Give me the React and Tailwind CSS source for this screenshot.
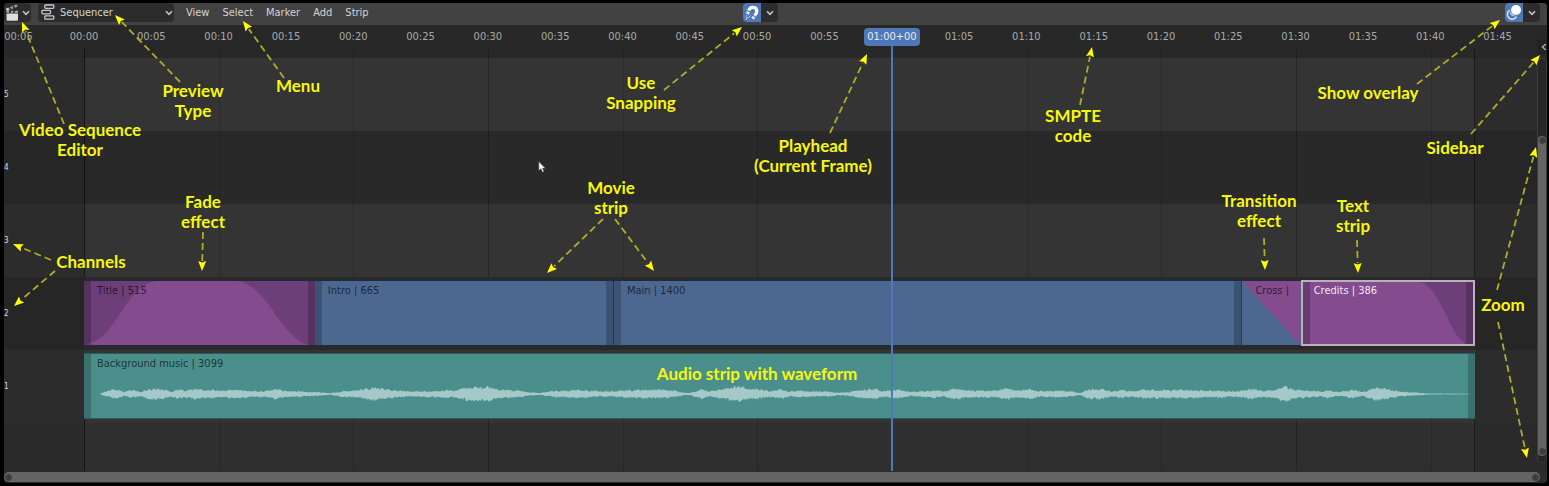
import React from "react";

const FPS = 30;
const W = 1549;
const H = 486;

const STRIP = "relative h-full min-w-0 border-y border-[#222a3a] overflow-hidden";

const TIMES = Array.from({ length: 23 }, (_, i) => (i - 1) * 5);
const GRID = Array.from({ length: 11 }, (_, i) => i * 10);

function timecode(s) {
  const a = Math.abs(s);
  const mm = String(Math.floor(a / 60)).padStart(2, "0");
  const ss = String(a % 60).padStart(2, "0");
  return `${s < 0 ? "-" : ""}${mm}:${ss}`;
}

const framePct = (f) => `${(f / 3099) * 100}%`;

const ENVELOPE = [
  [100, 0.3], [105, 2], [112, 4], [118, 4], [124, 2], [130, 4], [136, 3], [141, 2], [147, 4.5], [157, 5], [165, 4], [172, 2.5],
  [178, 4.5], [184, 3.5], [190, 4], [198, 5], [205, 3.5], [214, 4], [222, 3], [232, 4], [245, 3.5], [258, 2.5], [267, 3], [276, 5],
  [284, 3], [298, 3], [305, 2], [315, 2], [325, 1.2], [330, 0.7], [335, 1.5], [345, 3], [355, 3.5], [365, 5], [375, 6], [384, 4.5],
  [395, 3.5], [410, 2.5], [420, 2.5], [430, 3], [440, 3], [448, 4], [455, 3], [462, 5], [472, 7], [482, 6], [487, 8], [495, 4.5],
  [510, 3.5], [520, 3], [530, 1.5], [540, 1], [547, 2], [555, 3], [566, 3], [577, 4], [585, 3.5], [600, 2.5], [615, 2.5], [627, 3.5],
  [640, 4], [655, 4], [667, 4], [675, 3], [682, 1.5], [690, 1], [697, 3], [702, 4.5], [710, 2.5], [718, 4], [728, 5.5], [738, 7.5],
  [748, 5], [758, 4.5], [770, 3], [779, 4.5], [788, 2.5], [800, 3], [813, 2.5], [827, 2.5], [838, 1.2], [847, 1.5], [855, 3], [865, 4],
  [877, 5], [882, 2.5], [897, 4], [910, 2], [920, 2.5], [935, 3.5], [945, 2.5], [953, 5], [965, 4], [975, 3], [985, 3], [997, 3.5],
  [1005, 5], [1010, 5], [1018, 3.5], [1031, 5], [1037, 3], [1055, 3], [1072, 2.5], [1080, 1], [1087, 4], [1095, 5], [1106, 4],
  [1113, 2.5], [1120, 3.5], [1130, 3], [1145, 4], [1160, 4], [1175, 4], [1190, 4], [1205, 3], [1222, 3.5], [1230, 2.5], [1240, 3],
  [1252, 5], [1262, 3], [1275, 4], [1285, 7], [1295, 4], [1310, 3.5], [1322, 2.5], [1328, 4], [1335, 2], [1345, 2.5], [1353, 4],
  [1362, 2], [1370, 4], [1376, 6], [1385, 5], [1395, 3], [1405, 2], [1420, 1], [1430, 0.5], [1470, 0.3],
];

function waveformPath() {
  const top = [];
  const bottom = [];
  let k = 0;
  for (let x = 100; x <= 1470; x += 1) {
    while (k < ENVELOPE.length - 2 && ENVELOPE[k + 1][0] < x) k += 1;
    const [x0, a0] = ENVELOPE[k];
    const [x1, a1] = ENVELOPE[k + 1];
    const a = a0 + ((a1 - a0) * (x - x0)) / (x1 - x0);
    const n1 = Math.abs(Math.sin(x * 12.9898) * 43758.5453) % 1;
    const n2 = Math.abs(Math.sin(x * 78.233) * 12543.123) % 1;
    top.push(`${x - 84} ${(8 - a * (0.7 + 0.55 * n1)).toFixed(2)}`);
    bottom.unshift(`${x - 84} ${(8 + a * (0.7 + 0.55 * n2)).toFixed(2)}`);
  }
  return `M${top.join("L")}L${bottom.join("L")}Z`;
}
const WAVE = waveformPath();

const LABELS = [
  { x: 80, y: 120, lines: ["Video Sequence", "Editor"] },
  { x: 193, y: 81, lines: ["Preview", "Type"] },
  { x: 298, y: 76, lines: ["Menu"] },
  { x: 641, y: 73, lines: ["Use", "Snapping"] },
  { x: 813, y: 136, lines: ["Playhead", "(Current Frame)"] },
  { x: 1073, y: 106, lines: ["SMPTE", "code"] },
  { x: 1368, y: 83, lines: ["Show overlay"] },
  { x: 1455, y: 138, lines: ["Sidebar"] },
  { x: 203, y: 192, lines: ["Fade", "effect"] },
  { x: 611, y: 178, lines: ["Movie", "strip"] },
  { x: 1259, y: 191, lines: ["Transition", "effect"] },
  { x: 1353, y: 196, lines: ["Text", "strip"] },
  { x: 91, y: 252, lines: ["Channels"] },
  { x: 1503, y: 295, lines: ["Zoom"] },
  { x: 757, y: 364, lines: ["Audio strip with waveform"] },
];

const ARROWS = [
  [64, 124, 22, 22], [180, 82, 115, 15], [284, 78, 243, 21], [664, 90, 742, 27], [830, 133, 867, 54], [1080, 105, 1092, 47],
  [1417, 84, 1500, 20], [1471, 134, 1540, 55], [1497, 290, 1536, 147], [1498, 322, 1527, 458], [203, 232, 202, 271],
  [603, 219, 547, 273], [615, 219, 654, 271], [1264, 238, 1265, 270], [1357, 240, 1358, 273], [51, 260, 13, 244], [55, 271, 14, 306],
];

function Arrow({ from: [x1, y1, x2, y2] }) {
  const len = Math.hypot(x2 - x1, y2 - y1);
  const ux = (x2 - x1) / len;
  const uy = (y2 - y1) / len;
  const bx = x2 - ux * 10;
  const by = y2 - uy * 10;
  return (
    <g>
      <line x1={x1} y1={y1} x2={bx} y2={by} stroke="#adad2b" strokeWidth="1.8" strokeDasharray="7 4" />
      <polygon
        fill="#ffff00"
        points={`${x2},${y2} ${bx - uy * 4},${by + ux * 4} ${bx + ux * 1.5},${by + uy * 1.5} ${bx + uy * 4},${by - ux * 4}`}
      />
    </g>
  );
}

function Annotations() {
  return (
    <div className="pointer-events-none absolute inset-x-0 top-0 z-20 h-[486px]">
      <svg className="absolute inset-0 h-full w-full" viewBox={`0 0 ${W} ${H}`} preserveAspectRatio="none" aria-hidden="true">
        {ARROWS.map((a) => (
          <Arrow key={a.join()} from={a} />
        ))}
      </svg>
      {LABELS.map((l) => (
        <p
          key={l.lines[0]}
          className="absolute -translate-x-1/2 text-center font-['Lato',sans-serif] text-[17px] leading-5 font-bold whitespace-nowrap text-[#f7f70f]"
          style={{ left: `${(l.x / W) * 100}%`, top: l.y }}
        >
          {l.lines.map((t) => (
            <span key={t} className="block">
              {t}
            </span>
          ))}
        </p>
      ))}
    </div>
  );
}

function Chevron() {
  return (
    <svg viewBox="0 0 8 6" className="h-[6px] w-2 shrink-0" aria-hidden="true">
      <path d="M1 1.2 4 4.4 7 1.2" fill="none" stroke="#c4c4c4" strokeWidth="1.6" />
    </svg>
  );
}

function ToggleGroup({ label, children }) {
  return (
    <div className="flex h-[19px] overflow-hidden rounded bg-[#2c2c2c]">
      <button type="button" aria-label={label} aria-pressed="true" className="flex w-[18px] items-center justify-center bg-[#4f78b8]">
        {children}
      </button>
      <button type="button" aria-label={`${label} options`} className="flex w-[17px] items-center justify-center">
        <Chevron />
      </button>
    </div>
  );
}

function Toolbar() {
  return (
    <header className="flex h-[22px] items-start bg-[#424242] pr-[7px] text-[#d4d4d4]">
      <button type="button" aria-label="Editor type" className="flex h-[19px] w-[27px] items-center justify-center gap-[3px] rounded bg-[#2c2c2c]">
        <svg viewBox="0 0 14 18" className="h-[18px] w-[14px]" aria-hidden="true">
          <rect x="1.5" y="9.4" width="11.5" height="7.4" rx="0.8" fill="#dedede" />
          <path d="M.8 4.6 3.4 3.4 4.8 5.8 1.8 7.2Z" fill="#c8c8c8" />
          <path d="M4.8 3 7.2 2 8.6 4.2 6.4 5.2Z M8.6 1.6 11.8 .6 12.6 2.6 10 3.8Z" fill="#9c9c9c" />
          <path d="M1.5 8.8V6.8H4.6L3.8 8.8Z M5.4 8.8 6.4 6.8H8.8L7.8 8.8Z M9.4 8.8 10.4 6.8H13V8.8Z" fill="#a8a8a8" />
        </svg>
        <Chevron />
      </button>
      <div className="relative ml-[7px] h-[19px] w-[136px] rounded bg-[#2c2c2c]">
        <svg viewBox="0 0 14 16" className="absolute top-px left-[3px] h-4 w-[14px]" fill="none" stroke="#c9c9c9" strokeWidth="1.3" aria-hidden="true">
          <rect x="3.8" y="1" width="9" height="3.4" rx="0.8" />
          <rect x="0.9" y="6.4" width="8.6" height="3.4" rx="0.8" />
          <rect x="3.8" y="11.8" width="9" height="3.4" rx="0.8" />
        </svg>
        <select aria-label="View type" className="h-full w-full appearance-none bg-transparent pl-[22px] text-[11px] leading-[18px] text-[#d4d4d4]">
          <option>Sequencer</option>
        </select>
        <div className="pointer-events-none absolute inset-y-0 right-[1px] flex items-center">
          <Chevron />
        </div>
      </div>
      <nav className="ml-3 flex h-[19px] items-center gap-[13px]">
        {["View", "Select", "Marker", "Add", "Strip"].map((m) => (
          <button key={m} type="button" className="leading-[18px]">
            {m}
          </button>
        ))}
      </nav>
      <div className="flex-[34]" />
      <ToggleGroup label="Use snapping">
        <svg viewBox="0 0 18 19" className="h-[19px] w-[18px]" fill="none" aria-hidden="true">
          <path d="M5.6 7.6C7.4 2.8 13.6 3.4 13.8 8.2C13.9 10.4 12.6 11.6 11.4 12.6" stroke="#fff" strokeWidth="3.2" />
          <path d="M3.4 9.2 6.4 10.6M9.2 13.6 11.4 15.8" stroke="#e4ebf7" strokeWidth="2.4" />
          <path d="M3 17 3.6 14.4 5.4 14.8 7.6 12.4M2.6 13.4 4.2 12.2" stroke="#b9cbe8" strokeWidth="1" />
        </svg>
      </ToggleGroup>
      <div className="flex-[66]" />
      <ToggleGroup label="Show overlay">
        <svg viewBox="0 0 18 19" className="h-[19px] w-[18px]" fill="none" aria-hidden="true">
          <circle cx="11" cy="7" r="5" fill="#fff" />
          <path d="M4.8 7.2A4.8 4.8 0 1 0 11.4 13.6" stroke="#e4ebf7" strokeWidth="1.4" />
          <path d="M5 9.4A6 6 0 0 0 9.2 13" stroke="#e4ebf7" strokeWidth="1.2" />
        </svg>
      </ToggleGroup>
    </header>
  );
}

function Ruler() {
  return (
    <div className="relative h-6 overflow-hidden bg-[#282828] text-[#a8a8a8]">
      <div className="-ml-[1.36%] mr-[1.03%] flex h-full items-center">
        {TIMES.map((t) => (
          <span key={t} className="min-w-0 flex-1 text-center leading-6 whitespace-nowrap">
            {t === 60 ? "" : timecode(t)}
          </span>
        ))}
      </div>
    </div>
  );
}

function Columns({ className = "", left, right, children }) {
  return (
    <div className={`grid grid-cols-[80fr_1391fr_72fr] ${className}`}>
      <div className="min-w-0">{left}</div>
      <div className="relative min-w-0">{children}</div>
      <div className="min-w-0">{right}</div>
    </div>
  );
}

function Track({ channel, dark, children }) {
  return (
    <div className={dark ? "h-[73px] bg-[#292929]" : "h-[73px] bg-[#343434]"}>
      <Columns
        className="h-full"
        left={
          <div className={dark ? "flex h-full items-center bg-black/5" : "flex h-full items-center bg-black/15"}>
            <span className="block text-[8px] leading-3 text-[#d8d8d8]">{channel}</span>
          </div>
        }
        right={<div className={dark ? "h-full bg-black/5" : "h-full bg-black/15"} />}
      >
        <div className="flex h-full pt-[3px] pb-1">{children}</div>
      </Columns>
    </div>
  );
}

function Handle({ side }) {
  return <div className={side === "left" ? "absolute inset-y-0 left-0 w-[7px] bg-black/20" : "absolute inset-y-0 right-0 w-[7px] bg-black/20"} />;
}

function Name({ children, bold }) {
  return (
    <span className={bold ? "relative block truncate pt-[3px] pl-[11px] leading-3 font-medium text-[#f0e8f2]" : "relative block truncate pt-1 pl-[13px] leading-3 text-black/65"}>
      {children}
    </span>
  );
}

function VideoStrips() {
  return (
    <>
      <div className={`${STRIP} flex-[515] bg-[#844b8e]`}>
        <svg className="absolute inset-0 h-full w-full" viewBox="0 0 231 66" preserveAspectRatio="none" aria-hidden="true">
          <path d="M0 0H72C42 4 34 56 6 64L0 66Z M155 0H231V66H225C198 60 184 6 155 0Z" fill="#6d3f78" />
        </svg>
        <Handle side="left" />
        <Handle side="right" />
        <Name>Title | 515</Name>
      </div>
      <div className={`${STRIP} flex-[665] bg-[#4c6891]`}>
        <Handle side="left" />
        <Handle side="right" />
        <Name>Intro | 665</Name>
      </div>
      <div className={`${STRIP} flex-[1400] border-l border-l-[#263650] bg-[#4c6891]`}>
        <Handle side="left" />
        <Handle side="right" />
        <Name>Main | 1400</Name>
      </div>
      <div className={`${STRIP} flex-[130] border-l border-l-[#263650] bg-[#4c6891]`}>
        <svg className="absolute inset-0 h-full w-full" viewBox="0 0 58 66" preserveAspectRatio="none" aria-hidden="true">
          <path d="M0 0H58V66Z" fill="#844b8e" />
        </svg>
        <Name>Cross |</Name>
      </div>
      <div className="relative h-full min-w-0 flex-[380] overflow-hidden border-2 border-[#b9b0bb] bg-[#844b8e]">
        <svg className="absolute inset-0 h-full w-full" viewBox="0 0 174 64" preserveAspectRatio="none" aria-hidden="true">
          <path d="M120 0H174V64H166C148 52 142 8 120 0Z" fill="#6d3f78" />
        </svg>
        <Handle side="left" />
        <Handle side="right" />
        <Name bold>Credits | 386</Name>
      </div>
    </>
  );
}

function AudioStrip() {
  return (
    <div className="relative h-full min-w-0 flex-1 overflow-hidden border-y border-[#2b5b59] bg-[#4a8f8c]">
      <svg className="absolute inset-x-0 top-8 h-4 w-full" viewBox="0 0 1391 16" preserveAspectRatio="none" aria-hidden="true">
        <path d={WAVE} fill="#a5c8c8" />
      </svg>
      <Handle side="left" />
      <Handle side="right" />
      <Name>Background music | 3099</Name>
    </div>
  );
}

function Timeline() {
  return (
    <main className="relative flex flex-1 flex-col bg-[#282828]">
      <Ruler />
      <div className="relative flex flex-1 flex-col pt-[9px]">
        <Track channel="5" />
        <Track channel="4" dark />
        <Track channel="3" />
        <Track channel="2" dark>
          <VideoStrips />
        </Track>
        <Track channel="1">
          <AudioStrip />
        </Track>
        <Columns
          className="min-h-[47px] flex-1 bg-[#2f2f2f]"
          left={<div className="h-full bg-black/10" />}
          right={<div className="h-full bg-black/10" />}
        />
        <div className="pointer-events-none absolute inset-0">
          <Columns className="h-full">
            {GRID.map((s) => (
              <div
                key={s}
                className="absolute inset-y-0 w-px bg-black/25 [clip-path:polygon(0_0,100%_0,100%_228px,0_228px,0_0,0_370px,100%_370px,100%_100%,0_100%,0_370px)]"
                style={{ left: framePct(s * FPS) }}
              />
            ))}
            <div className="absolute inset-0 border-x border-black/45 [clip-path:polygon(0_0,100%_0,100%_228px,0_228px,0_0,0_370px,100%_370px,100%_100%,0_100%,0_370px)]" />
          </Columns>
        </div>
      </div>
      <div className="pointer-events-none absolute inset-0">
        <Columns className="h-full">
          <div className="absolute inset-y-0 flex w-0 flex-col items-center" style={{ left: framePct(60 * FPS) }}>
            <span className="mt-[3px] rounded bg-[#4f78b8] px-[3px] leading-[18px] whitespace-nowrap text-[#e9eef6]">01:00+00</span>
            <span className="w-[2px] flex-1 bg-[#4f78b8]" />
          </div>
        </Columns>
      </div>
    </main>
  );
}

function Knob() {
  return <span className="block size-[7px] shrink-0 rounded-full border border-[#424242] bg-[#3c3c3c]" />;
}

function VerticalZoom() {
  return (
    <div className="absolute top-[22px] right-0 bottom-[12px] flex w-[10px] flex-col items-center">
      <button type="button" aria-label="Show sidebar" className="mt-[14px] flex h-4 w-full items-center justify-end rounded-l bg-[#222]">
        <svg viewBox="0 0 6 8" className="h-2 w-[6px]" aria-hidden="true">
          <path d="M4.8 1 1.4 4 4.8 7" fill="none" stroke="#a8a8a8" strokeWidth="1.5" />
        </svg>
      </button>
      <div className="mt-[3px] mb-2 flex w-full flex-1 flex-col rounded-full border border-[#3d3d3d] bg-[#262626] pt-[77px] pb-[6px]">
        <div className="flex flex-1 flex-col items-center justify-between rounded-full bg-[#646464] py-px">
          <Knob />
          <Knob />
        </div>
      </div>
    </div>
  );
}

export default function App() {
  return (
    <div className="relative flex min-h-screen flex-col bg-black pt-[3px] pr-[2px] pb-[3px] pl-1 font-['DejaVu_Sans_Condensed','DejaVu_Sans',sans-serif] text-[11px]">
      <div className="relative flex flex-1 flex-col overflow-hidden rounded-sm bg-[#2b2b2b]">
        <Toolbar />
        <Timeline />
        <div className="h-3 bg-[#2b2b2b] pt-px pr-[7px] pb-px">
          <div className="flex h-[10px] items-center justify-between rounded-full bg-[#646464] px-px">
            <Knob />
            <Knob />
          </div>
        </div>
        <VerticalZoom />
        <svg viewBox="0 0 8 12" className="absolute top-[158px] left-[534px] h-3 w-2" aria-hidden="true">
          <path d="M.8.6V9.6L3 7.8 4.4 11.2 6 10.6 4.6 7.2H7.4Z" fill="#f2f2f2" stroke="#333" strokeWidth=".4" />
        </svg>
      </div>
      <Annotations />
    </div>
  );
}
